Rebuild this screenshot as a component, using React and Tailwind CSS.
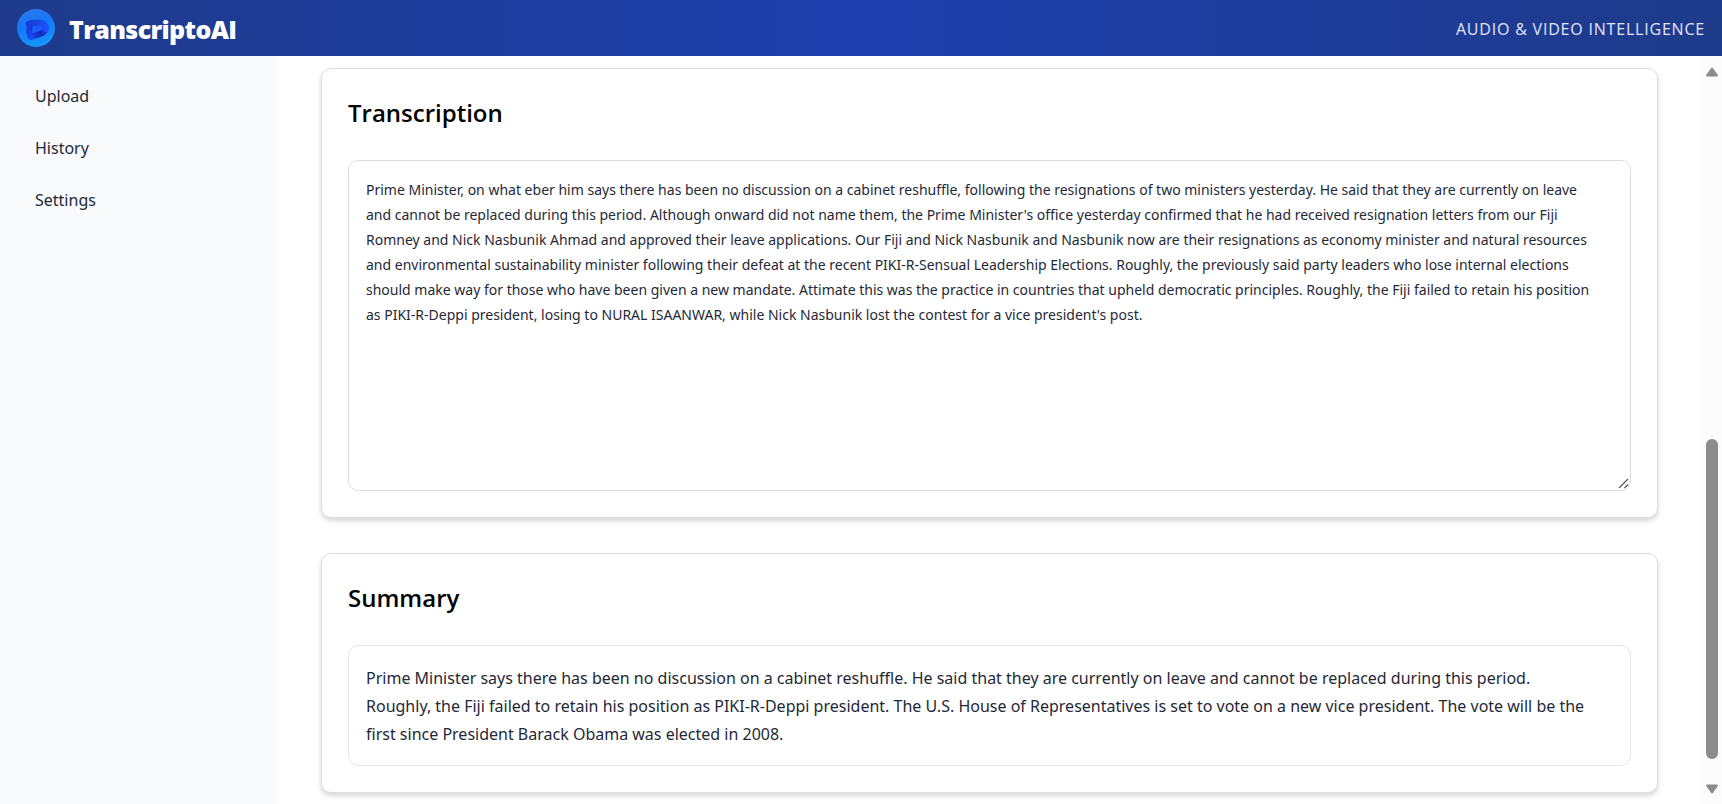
const transcription = [
  "Prime Minister, on what eber him says there has been no discussion on a cabinet reshuffle, following the resignations of two ministers yesterday. He said that they are currently on leave",
  "and cannot be replaced during this period. Although onward did not name them, the Prime Minister's office yesterday confirmed that he had received resignation letters from our Fiji",
  "Romney and Nick Nasbunik Ahmad and approved their leave applications. Our Fiji and Nick Nasbunik and Nasbunik now are their resignations as economy minister and natural resources",
  "and environmental sustainability minister following their defeat at the recent PIKI-R-Sensual Leadership Elections. Roughly, the previously said party leaders who lose internal elections",
  "should make way for those who have been given a new mandate. Attimate this was the practice in countries that upheld democratic principles. Roughly, the Fiji failed to retain his position",
  "as PIKI-R-Deppi president, losing to NURAL ISAANWAR, while Nick Nasbunik lost the contest for a vice president's post.",
].join("\n");

const summary = [
  "Prime Minister says there has been no discussion on a cabinet reshuffle. He said that they are currently on leave and cannot be replaced during this period.",
  "Roughly, the Fiji failed to retain his position as PIKI-R-Deppi president. The U.S. House of Representatives is set to vote on a new vice president. The vote will be the",
  "first since President Barack Obama was elected in 2008.",
].join("\n");

function Logo() {
  return (
    <svg viewBox="0 0 38 38" className="size-[38px] shrink-0" aria-hidden="true">
      <defs>
        <linearGradient id="disc" x1="0.3" y1="0" x2="0.6" y2="1">
          <stop offset="0" stopColor="#2c78ee" />
          <stop offset="0.4" stopColor="#1478fa" />
          <stop offset="1" stopColor="#1597ff" />
        </linearGradient>
        <linearGradient id="band" gradientUnits="userSpaceOnUse" x1="8" y1="12" x2="31" y2="20">
          <stop offset="0" stopColor="#1238cc" />
          <stop offset="0.5" stopColor="#1b45e6" />
          <stop offset="1" stopColor="#1a55fa" />
        </linearGradient>
        <linearGradient id="side" gradientUnits="userSpaceOnUse" x1="12" y1="12" x2="12" y2="31">
          <stop offset="0" stopColor="#1233c6" />
          <stop offset="1" stopColor="#1a50f4" />
        </linearGradient>
        <linearGradient id="base" gradientUnits="userSpaceOnUse" x1="12" y1="29" x2="30" y2="18">
          <stop offset="0" stopColor="#1a4df0" />
          <stop offset="0.6" stopColor="#1029bd" />
          <stop offset="1" stopColor="#1a50f2" />
        </linearGradient>
      </defs>
      <circle cx="19" cy="19" r="19" fill="url(#disc)" />
      <path d="M12 14 25 15 29 20 14 28z" fill="#1a5cfa" />
      <g fill="none" strokeLinecap="round" strokeLinejoin="round">
        <path d="M29 20c-1 3-3 4-6 5l-9 3" stroke="url(#base)" strokeWidth="6" />
        <path d="M12 15c2 2 0 4 0 7 0 3 1 5 2 6" stroke="url(#side)" strokeWidth="6" />
        <path d="M12 15c3-2 7-1 12-1 3 0 5 3 5 6" stroke="url(#band)" strokeWidth="6" />
      </g>
    </svg>
  );
}

function Card({ title, children, labelFor }) {
  return (
    <section className="rounded-[10px] border border-[#dcdee2] bg-white p-[26px] shadow-[0_3px_5px_rgba(0,0,0,0.16)]">
      <h2 className="mb-[29px] font-['Open_Sans',sans-serif] text-2xl leading-9 font-semibold text-black">
        {labelFor ? <label htmlFor={labelFor}>{title}</label> : title}
      </h2>
      {children}
    </section>
  );
}

function ScrollRail() {
  return (
    <div className="flex w-5 shrink-0 flex-col items-center bg-[#fcfcfc] pt-[11px] pb-[10px]" aria-hidden="true">
      <svg viewBox="0 0 14 10" className="h-[10px] w-[14px]">
        <path d="M7 1.500 12 8.500H2z" fill="#8b8b8b" stroke="#8b8b8b" strokeWidth="2" strokeLinejoin="round" />
      </svg>
      <div className="flex-1" />
      <div className="h-[44%] w-3 rounded-full bg-[#8b8b8b]" />
      <svg viewBox="0 0 14 10" className="mt-[25px] h-[10px] w-[14px]">
        <path d="M7 8.500 12 1.500H2z" fill="#8b8b8b" stroke="#8b8b8b" strokeWidth="2" strokeLinejoin="round" />
      </svg>
    </div>
  );
}

export default function App() {
  return (
    <div className="flex h-screen flex-col bg-white text-[#1f2937]">
      <header className="flex h-14 shrink-0 items-center justify-between bg-linear-to-r from-[#1e3a8a] via-[#1e40af] to-[#1e3a8a] px-[17px] font-['Open_Sans','Noto_Sans',sans-serif]">
        <div className="flex items-center gap-[14px]">
          <Logo />
          <h1 className="pt-0.5 text-[25px] leading-8 font-extrabold tracking-tight text-white">TranscriptoAI</h1>
        </div>
        <p className="pt-0.5 text-base tracking-wider text-[#e0e7ff] uppercase">Audio &amp; Video Intelligence</p>
      </header>
      <div className="flex min-h-0 flex-1 font-['Noto_Sans','Open_Sans',sans-serif]">
        <nav className="flex w-[277px] shrink-0 flex-col gap-7 bg-[#f8fafc] px-[35px] pt-7 text-base">
          <a href="#upload">Upload</a>
          <a href="#history">History</a>
          <a href="#settings">Settings</a>
        </nav>
        <main className="flex min-w-0 flex-1 flex-col gap-[35px] overflow-hidden px-11 pt-3">
          <Card title="Transcription" labelFor="transcription">
            <div className="relative">
              <textarea
                id="transcription"
                className="block h-[331px] w-full resize rounded-[10px] border border-[#d9dce0] bg-white px-[17px] py-4 text-sm leading-[25px] [&::-webkit-resizer]:bg-transparent"
                defaultValue={transcription}
              />
              <svg viewBox="0 0 12 12" className="pointer-events-none absolute right-px bottom-px size-3" aria-hidden="true">
                <path d="M1 10 10 1M6.500 10 10 6.500" fill="none" stroke="#555" strokeWidth="1.300" />
              </svg>
            </div>
          </Card>
          <Card title="Summary">
            <p className="rounded-[10px] border border-[#e2e5e9] px-[17px] pt-[18px] pb-[17px] text-base leading-7 whitespace-pre-line">
              {summary}
            </p>
          </Card>
        </main>
        <ScrollRail />
      </div>
    </div>
  );
}
